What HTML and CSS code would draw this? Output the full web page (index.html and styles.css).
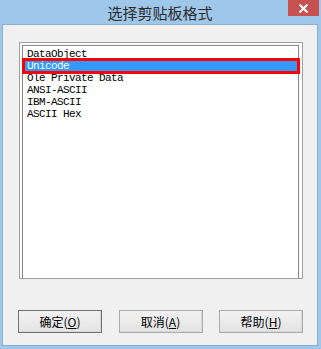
FILE: index.html
```html
<!DOCTYPE html>
<html lang="zh-CN">
<head>
  <meta charset="UTF-8">
  <title>选择剪贴板格式</title>
  <link rel="stylesheet" href="styles.css">
</head>
<body>
  <div class="window">
    <div class="titlebar">
      <span class="title">选择剪贴板格式</span>
      <span class="close">
        <svg width="11" height="9" viewBox="0 0 11 9">
          <path d="M1.5 0.5 L9.5 8.5 M9.5 0.5 L1.5 8.5" stroke="#fff" stroke-width="2"/>
        </svg>
      </span>
    </div>
    <div class="client">
      <div class="frame">
        <ul class="list">
          <li>DataObject</li>
          <li class="selected">Unicode</li>
          <li>Ole Private Data</li>
          <li>ANSI-ASCII</li>
          <li>IBM-ASCII</li>
          <li>ASCII Hex</li>
        </ul>
      </div>
      <div class="buttons">
        <button class="btn default">确定(<u>O</u>)</button>
        <button class="btn">取消(<u>A</u>)</button>
        <button class="btn">帮助(<u>H</u>)</button>
      </div>
    </div>
  </div>
</body>
</html>
```

FILE: styles.css
```css
body {
  margin: 0;
  background: #9fc7ea;
}
.window {
  width: 321px;
  height: 349px;
  background: #9fc7ea;
  box-sizing: border-box;
}
.titlebar {
  position: relative;
  height: 24px;
  display: flex;
  align-items: center;
  justify-content: center;
}
.title {
  font-family: "Noto Sans CJK SC", sans-serif;
  font-size: 15px;
  color: #2b2b2b;
  margin-left: -1px;
}
.close {
  position: absolute;
  top: 0;
  right: 2px;
  width: 31px;
  height: 16px;
  background: #c75050;
  display: flex;
  align-items: center;
  justify-content: center;
}
.client {
  margin: 0 3px 0 2px;
  height: 322px;
  box-sizing: border-box;
  border: 1px solid #8aafd2;
  background: #f0f0f0;
  padding: 17px 0 0 15px;
}
.frame {
  margin-left: 1px;
  width: 284px;
  height: 237px;
  box-sizing: border-box;
  border: 1px solid #a0a0a0;
  border-bottom-color: #a0a0a0;
  background: #fcfcfc;
  padding: 2px 3px 0 2px;
}
.list {
  list-style: none;
  margin: 0;
  height: 100%;
  box-sizing: border-box;
  border: 1px solid #828790;
  border-bottom: none;
  background: #fff;
  padding: 2px 0 0 1px;
  font-family: "Liberation Mono", monospace;
  font-size: 11px;
  letter-spacing: -0.6px;
  color: #000;
}
.list li {
  height: 12px;
  line-height: 12px;
  padding-left: 3px;
  margin-right: 0;
}
.list .selected {
  background: #3399ff;
  color: #fff;
  outline: 3px solid #ff0000;
  outline-offset: -1px;
}
.buttons {
  margin-top: 31px;
  width: 285px;
  display: flex;
  justify-content: space-between;
}
.btn {
  width: 84px;
  height: 23px;
  padding: 0;
  border: 1px solid #acacac;
  background: linear-gradient(#f2f2f2, #e3e3e3);
  font-family: "Noto Sans CJK SC", sans-serif;
  font-size: 12px;
  color: #000;
  box-shadow: inset -1px -1px 0 #d8d8d8;
}
.btn.default {
  border-color: #707070;
}
```
